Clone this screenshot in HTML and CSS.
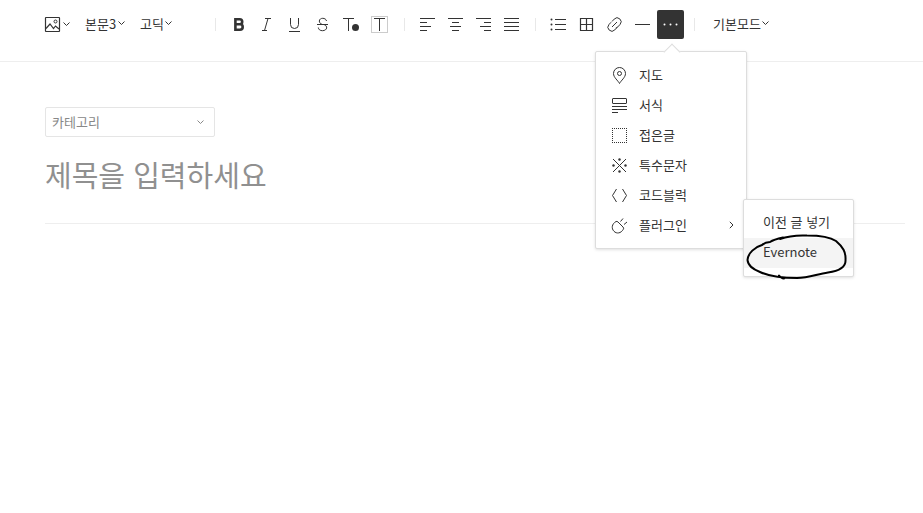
FILE: index.html
```html
<!DOCTYPE html>
<html lang="ko">
<head>
  <meta charset="utf-8">
  <meta name="viewport" content="width=device-width, initial-scale=1">
  <title>글쓰기</title>
  <link rel="stylesheet" href="styles.css">
</head>
<body>
  <svg class="defs" aria-hidden="true">
    <symbol id="chevron" viewBox="0 0 7 5"><path d="M.5 .5l3 3 3-3"/></symbol>
  </svg>

  <header class="toolbar">
    <div class="group group-format">
      <button class="image-button" type="button" aria-label="첨부">
        <svg class="icon" viewBox="0 0 15 15"><rect class="firm" x=".5" y=".5" width="14" height="14" rx=".5"/><path class="firm" d="M1 11.500l4-4.500 3.500 4.500 2-2.500 3.500 3"/><circle cx="10.500" cy="4.500" r="1.500"/></svg>
        <svg class="chevron"><use href="#chevron"/></svg>
      </button>
      <label class="picker">
        <select aria-label="문단 모양"><option>본문3</option></select>
        <svg class="chevron"><use href="#chevron"/></svg>
      </label>
      <label class="picker">
        <select aria-label="글꼴"><option>고딕</option></select>
        <svg class="chevron"><use href="#chevron"/></svg>
      </label>
    </div>

    <span class="separator"></span>

    <div class="group group-style">
      <button class="tool" type="button" aria-label="굵게">
        <svg class="icon" viewBox="0 0 15 15"><path class="heavy" d="M3.400 2.300h4.300a2.500 2.500 0 0 1 0 5H3.400zM3.400 7.300h4.600a2.700 2.700 0 0 1 0 5.400H3.400z"/></svg>
      </button>
      <button class="tool" type="button" aria-label="기울임">
        <svg class="icon" viewBox="0 0 15 15"><path d="M5 1.500h6M2 13.500h5M8 1.500l-3.500 12"/></svg>
      </button>
      <button class="tool" type="button" aria-label="밑줄">
        <svg class="icon" viewBox="0 0 15 15"><path d="M2.500 1v6.500a4 4 0 0 0 8 0V1M1 14.500h11"/></svg>
      </button>
      <button class="tool" type="button" aria-label="취소선">
        <svg class="icon" viewBox="0 0 15 15"><path d="M10.500 4C10 .5 3.500 .3 3.300 4c0 2 1.500 2.800 3.200 3.500M8 7.500c4 1.500 3.500 6 -1.500 6.200-2.500 0-4-1.200-4.200-3.200M1 7.500h11"/></svg>
      </button>
      <button class="tool" type="button" aria-label="글자색">
        <svg class="icon wide" viewBox="0 0 17 17"><path d="M0 2.500h11M5.500 2.500V15"/><circle class="fill" cx="12.500" cy="11.500" r="3.500"/></svg>
      </button>
      <button class="tool" type="button" aria-label="글자 배경색">
        <svg class="icon wide" viewBox="0 0 17 17"><rect class="pale" x=".5" y=".5" width="16" height="16"/><path d="M3 2.500h11M8.500 2.500V15"/></svg>
      </button>
    </div>

    <span class="separator"></span>

    <div class="group">
      <button class="tool" type="button" aria-label="왼쪽 정렬">
        <svg class="icon" viewBox="0 0 15 15"><path d="M0 1.500h15M0 5.500h7M0 9.500h11M0 13.500h7"/></svg>
      </button>
      <button class="tool" type="button" aria-label="가운데 정렬">
        <svg class="icon" viewBox="0 0 15 15"><path d="M0 1.500h15M4 5.500h7M2 9.500h11M4 13.500h7"/></svg>
      </button>
      <button class="tool" type="button" aria-label="오른쪽 정렬">
        <svg class="icon" viewBox="0 0 15 15"><path d="M0 1.500h15M8 5.500h7M4 9.500h11M8 13.500h7"/></svg>
      </button>
      <button class="tool" type="button" aria-label="양쪽 정렬">
        <svg class="icon" viewBox="0 0 15 15"><path d="M0 1.500h15M0 5.500h15M0 9.500h15M0 13.500h15"/></svg>
      </button>
    </div>

    <span class="separator"></span>

    <div class="group">
      <button class="tool" type="button" aria-label="목록">
        <svg class="icon" viewBox="0 0 15 15"><path d="M4 2.500h11M4 7.500h11M4 12.500h11"/><circle class="fill" cx="0.500" cy="2.500" r="1"/><circle class="fill" cx="0.500" cy="7.500" r="1"/><circle class="fill" cx="0.500" cy="12.500" r="1"/></svg>
      </button>
      <button class="tool" type="button" aria-label="표">
        <svg class="icon" viewBox="0 0 15 15"><path class="firm" d="M1.500 1.500h12v12h-12zM7.500 1.500v12M1.500 7.500h12"/></svg>
      </button>
      <button class="tool" type="button" aria-label="링크">
        <svg class="icon" viewBox="0 0 15 15"><path d="M5 10l5-5M5 4.500l2.200-2.400a3.900 3.900 0 0 1 5.800 5.400l-2.200 2.400q-.8.800-2 1M10 10.500l-2.200 2.400a3.900 3.900 0 0 1-5.800-5.400l2-2.200"/></svg>
      </button>
      <button class="tool" type="button" aria-label="구분선">
        <svg class="icon" viewBox="0 0 15 15"><path d="M0 7.500h15"/></svg>
      </button>
      <div class="more">
        <button class="tool active" type="button" aria-label="더보기" aria-expanded="true">
          <svg class="icon" viewBox="0 0 15 15"><circle class="fill" cx="1.500" cy="7.500" r="1"/><circle class="fill" cx="7.500" cy="7.500" r="1"/><circle class="fill" cx="13.500" cy="7.500" r="1"/></svg>
        </button>
        <div class="menu menu-more">
          <button class="item" type="button">
            <svg class="icon wide" viewBox="0 0 17 17"><path d="M8.500 16.500C7 13.500 2.500 10.500 2.500 6.500a6 6 0 0 1 12 0c0 4-4.500 7-6 10z"/><circle cx="8.500" cy="6.500" r="2"/></svg>
            지도
          </button>
          <button class="item" type="button">
            <svg class="icon" viewBox="0 0 15 15"><rect x=".5" y=".5" width="14" height="5" rx=".5"/><path d="M0 8.500h15M0 11.500h15M0 14.500h6"/></svg>
            서식
          </button>
          <button class="item" type="button">
            <svg class="icon" viewBox="0 0 15 15"><path class="dotted" d="M0 .5h15M0 14.500h15M.5 2v12M14.500 2v12"/></svg>
            접은글
          </button>
          <button class="item" type="button">
            <svg class="icon" viewBox="0 0 15 15"><path d="M1 1l13 13M14 1L1 14"/><circle class="fill" cx="7.500" cy="1.500" r="1.200"/><circle class="fill" cx="7.500" cy="13.500" r="1.200"/><circle class="fill" cx="1.500" cy="7.500" r="1.200"/><circle class="fill" cx="13.500" cy="7.500" r="1.200"/></svg>
            특수문자
          </button>
          <button class="item" type="button">
            <svg class="icon" viewBox="0 0 15 15"><path d="M4.500 1l-4 6.500 4 6.500M10.500 1l4 6.500-4 6.500"/></svg>
            코드블럭
          </button>
          <button class="item" type="button" aria-expanded="true">
            <svg class="icon" viewBox="0 0 15 15"><path d="M4 3.500Q5 3 6 4l5 5q1.200 1.200.3 2.300C9 15.500 4.500 16 2 13.300-.8 10.500-.3 6 4 3.500zM8.500 3.500l2.500-3M12 6.500l3-2.500"/></svg>
            플러그인
            <svg class="arrow" viewBox="0 0 5 8"><path d="M.8 .8L4 4 .8 7.200"/></svg>
          </button>

          <div class="menu menu-plugin">
            <button class="item" type="button">이전 글 넣기</button>
            <button class="item selected" type="button">Evernote</button>
            <svg class="scribble" viewBox="0 0 104 48"><path d="M38 4.500C31 6 28 7 25 9C21 9 19 10 17 12C10 14 3 20 2.500 27C3 33 8 36 15 39C24 43 38 45 52 45C64 45 72 41 83 39.500C93 38 101 34 100.500 27C101 19 98 14 91 8C85 4 73 2.500 62 2.500C51 2 43 3 35 6M34 42.500q2 3 5 3"/></svg>
          </div>
        </div>
      </div>
    </div>

    <span class="separator"></span>

    <label class="picker picker-mode">
      <select aria-label="편집 모드"><option>기본모드</option></select>
      <svg class="chevron"><use href="#chevron"/></svg>
    </label>
  </header>

  <main class="editor">
    <label class="category">
      <select aria-label="카테고리"><option>카테고리</option></select>
      <svg class="chevron" viewBox="0 0 7 5"><use href="#chevron"/></svg>
    </label>
    <input class="title" type="text" placeholder="제목을 입력하세요" aria-label="제목">
  </main>
</body>
</html>
```

FILE: styles.css
```css
* {
  box-sizing: border-box;
}
body {
  min-height: 100vh;
  margin: 0;
  background: #fff;
  color: #333;
  font: 13px/20px "Noto Sans CJK KR", sans-serif;
}
button, select, input {
  margin: 0;
  padding: 0;
  border: 0;
  background: none;
  color: inherit;
  font: inherit;
}
select {
  appearance: none;
}
svg {
  display: block;
  flex-shrink: 0;
  overflow: visible;
  fill: none;
  stroke: currentColor;
}
.defs {
  position: absolute;
  width: 0;
  height: 0;
}

/* icons */
.icon {
  width: 15px;
  height: 15px;
}
.icon.wide {
  width: 17px;
  height: 17px;
}
.icon .fill {
  fill: currentColor;
  stroke: none;
}
.icon .heavy {
  stroke-width: 2.6;
}
.icon .firm {
  stroke-width: 1.2;
}
.icon .pale {
  stroke: #ccc;
}
.icon .dotted {
  stroke-dasharray: 1 1;
}
.chevron {
  width: 7px;
  height: 5px;
}

/* toolbar */
.toolbar {
  display: flex;
  align-items: flex-start;
  height: 62px;
  padding: 10px 18px 0 45px;
  border-bottom: 1px solid #eee;
}
.group {
  display: flex;
  gap: 1px;
}
.group-format {
  gap: 15px;
  min-width: 160px;
}
.group-style {
  padding: 0 1px;
}
.separator {
  width: 1px;
  height: 13px;
  margin: 8px 9px 0 10px;
  background: #e8e8e8;
}
.tool {
  display: flex;
  align-items: center;
  justify-content: center;
  width: 27px;
  height: 29px;
}
.tool.active {
  border-radius: 2px;
  background: #333;
  color: #fff;
}
.image-button, .picker {
  display: flex;
  align-items: center;
  gap: 1px;
  height: 29px;
}
.image-button {
  gap: 3px;
}
.picker {
  height: 27px;
}
.picker-mode {
  padding-left: 9px;
}

/* menus */
.more {
  position: relative;
}
.menu {
  position: absolute;
  padding: 8px 0;
  border: 1px solid #ddd;
  border-radius: 2px;
  background: #fff;
  box-shadow: 0 1px 3px rgba(0, 0, 0, 0.12);
}
.menu-more {
  top: 41px;
  left: -62px;
  width: 152px;
}
.menu-more::before {
  content: "";
  position: absolute;
  top: -6px;
  left: 70px;
  width: 11px;
  height: 11px;
  border: 1px solid #ddd;
  border-width: 1px 0 0 1px;
  background: #fff;
  transform: rotate(45deg);
}
.menu-plugin {
  top: 147px;
  left: 147px;
  width: 111px;
}
.item {
  display: grid;
  grid-template-columns: 17px 1fr auto;
  align-items: center;
  justify-items: start;
  gap: 11px;
  width: 100%;
  height: 30px;
  padding: 0 12px 0 15px;
  text-align: left;
}
.item .icon {
  justify-self: center;
}
.arrow {
  width: 5px;
  height: 8px;
}
.menu-plugin .item {
  display: block;
  padding: 0 19px 2px;
}
.item.selected {
  background: #f4f4f4;
}
.scribble {
  position: absolute;
  top: 33px;
  left: 1px;
  width: 104px;
  height: 48px;
  stroke: #000;
  stroke-width: 2;
  stroke-linecap: round;
  pointer-events: none;
}

/* editor */
.editor {
  padding: 45px 18px 0 45px;
}
.category {
  display: flex;
  align-items: center;
  width: 170px;
  height: 30px;
  padding: 0 10px 0 6px;
  border: 1px solid #e5e5e5;
  border-radius: 2px;
  color: #888;
}
.category select {
  flex: 1;
}
.title {
  display: block;
  width: 100%;
  height: 87px;
  padding-bottom: 12px;
  border-bottom: 1px solid #eee;
  font-size: 29px;
}
.title::placeholder {
  color: #909090;
  opacity: 1;
}
```
